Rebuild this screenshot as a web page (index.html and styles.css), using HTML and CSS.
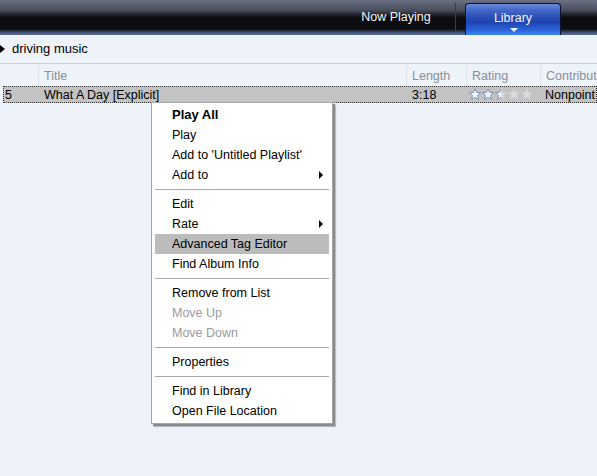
FILE: index.html
```html
<!DOCTYPE html>
<html lang="en">
  <head>
    <meta charset="utf-8">
    <title>Library</title>
    <link rel="stylesheet" href="styles.css">
  </head>
  <body>
    <div class="topbar">
      <div class="tab">Now Playing</div>
      <div class="tab-sep"></div>
      <div class="tab tab-on">Library<span class="tab-arrow"></span></div>
    </div>
    <div class="crumb"><span class="crumb-arrow"></span>driving music</div>
    <div class="list">
      <div class="row head">
        <div class="c-num"></div>
        <div class="c-title">Title</div>
        <div class="c-len">Length</div>
        <div class="c-rate">Rating</div>
        <div class="c-by">Contribut</div>
      </div>
      <div class="row sel">
        <div class="c-num">5</div>
        <div class="c-title">What A Day [Explicit]</div>
        <div class="c-len">3:18</div>
        <div class="c-rate stars">
          <svg width="64" height="13" viewBox="0 0 64 13">
            <defs>
              <path id="star" d="M6 0.8 L7.6 4.4 L11.6 4.6 L8.5 7.3 L9.5 11.6 L6 9.3 L2.5 11.6 L3.5 7.3 L0.4 4.6 L4.4 4.4 Z"/>
              <clipPath id="half"><rect x="0" y="0" width="6" height="13"/></clipPath>
            </defs>
            <use href="#star" x="0" fill="#f6f9ff" stroke="#7d93b8" stroke-width="1"/>
            <use href="#star" x="13" fill="#f6f9ff" stroke="#7d93b8" stroke-width="1"/>
            <use href="#star" x="26" fill="#d8dadd" stroke="#cdd0d4" stroke-width="1"/>
            <g transform="translate(26 0)"><use href="#star" fill="#f6f9ff" stroke="#7d93b8" stroke-width="1" clip-path="url(#half)"/></g>
            <use href="#star" x="39" fill="#d8dadd" stroke="#cdd0d4" stroke-width="1"/>
            <use href="#star" x="52" fill="#d8dadd" stroke="#cdd0d4" stroke-width="1"/>
          </svg>
        </div>
        <div class="c-by">Nonpoint</div>
      </div>
    </div>

    <ul class="menu">
      <li class="bold">Play All</li>
      <li>Play</li>
      <li>Add to 'Untitled Playlist'</li>
      <li class="sub">Add to</li>
      <li class="sep"></li>
      <li>Edit</li>
      <li class="sub">Rate</li>
      <li class="hot">Advanced Tag Editor</li>
      <li>Find Album Info</li>
      <li class="sep"></li>
      <li>Remove from List</li>
      <li class="off">Move Up</li>
      <li class="off">Move Down</li>
      <li class="sep"></li>
      <li>Properties</li>
      <li class="sep"></li>
      <li>Find in Library</li>
      <li>Open File Location</li>
    </ul>
  </body>
</html>
```

FILE: styles.css
```css
html { box-sizing : border-box }
*, *:before, *:after { box-sizing : inherit }

:root {
  --c-bg : #eef2f9;
  --c-line : #c6cedb;
  --c-head : #8a8f99;
  --c-sel : #c3c3c3;
  --c-fg : #000;
  --c-menu-line : #a8a8a8;

  --f-ui : "Liberation Sans", "DejaVu Sans", sans-serif;
}

body {
  margin : 0;
  background-color : var(--c-bg);
  font-family : var(--f-ui);
  font-size : 12px;
  color : var(--c-fg);
  overflow : hidden;
}

/* top bar */

.topbar {
  height : 35px;
  display : flex;
  justify-content : flex-end;
  align-items : flex-end;
  padding-right : 36px;
  background : linear-gradient(to bottom, #6b7183 0px, #4a4f5e 10px, #202228 15px, #0b0b0d 18px, #0d0e12 29px, #2a3246 31px, #4a5c86 33px, #5a6c96 35px);
}

.tab {
  height : 35px;
  width : 96px;
  color : #f2f4f8;
  font-size : 12.5px;
  display : flex;
  justify-content : center;
  padding-top : 10px;
  position : relative;
}

.tab-sep {
  width : 1px;
  height : 28px;
  margin : 0 9px 4px 11px;
  background : #3a3e48;
}

.tab-on {
  height : 32px;
  padding-top : 7px;
  border : 1px solid #0c1530;
  border-bottom : none;
  border-radius : 4px 4px 0 0;
  background : linear-gradient(to bottom, #6e8ad8 0px, #4468cc 6px, #2a4cb4 14px, #1e44b0 18px, #2c62d8 26px, #3a86f0 31px);
}

.tab-arrow {
  position : absolute;
  left : 44px;
  bottom : 3px;
  border-left : 4px solid transparent;
  border-right : 4px solid transparent;
  border-top : 4px solid #eef2fa;
}

/* breadcrumb */

.crumb {
  height : 29px;
  display : flex;
  align-items : center;
  gap : 7px;
  font-size : 13px;
  padding-bottom : 1px;
  border-bottom : 1px solid var(--c-line);
}

.crumb-arrow {
  border-top : 4px solid transparent;
  border-bottom : 4px solid transparent;
  border-left : 5px solid #000;
}

/* list */

.row {
  display : flex;
  align-items : center;
  white-space : nowrap;
}

.row > div { padding-left : 5px; overflow : hidden }

.c-num { width : 38px }
.c-title { width : 368px }
.c-len { width : 60px }
.c-rate { width : 74px }
.c-by { flex : 1 }

.head {
  height : 22px;
  padding-top : 1px;
  color : var(--c-head);
  font-size : 12.5px;
}

.head > div {
  height : 100%;
  display : flex;
  align-items : center;
}

.head > div + div { border-left : 1px solid #dde2ea }

.sel {
  height : 17px;
  margin-left : 3px;
  background : var(--c-sel);
  outline : 1px dotted #333;
  outline-offset : -1px;
  font-size : 12.5px;
}

.sel .c-num { width : 35px; padding-left : 2px }
.sel .c-title { padding-left : 6px }
.sel .c-len { padding-left : 6px }
.sel .stars { display : flex; padding-left : 3px }

/* context menu */

.menu {
  position : absolute;
  left : 151px;
  top : 102px;
  width : 182px;
  margin : 0;
  padding : 2px 3px;
  list-style : none;
  background : #fff;
  border : 1px solid #a6a6a6;
  box-shadow : 2px 2px 0 #8a8a8a, 3px 3px 1px #b8bcc4;
  font-size : 12.5px;
}

.menu li {
  height : 20px;
  line-height : 20px;
  padding-left : 17px;
  position : relative;
}

.menu .bold { font-weight : bold; font-size : 13px }
.menu .hot { background : #bcbcbc }
.menu .off { color : #9a9a9a }

.menu .sub:after {
  content : "";
  position : absolute;
  right : 6px;
  top : 6px;
  border-top : 4px solid transparent;
  border-bottom : 4px solid transparent;
  border-left : 4px solid #000;
}

.menu .sep {
  height : 9px;
  padding : 0;
}

.menu .sep:after {
  content : "";
  position : absolute;
  left : 0;
  right : 0;
  top : 4px;
  border-top : 1px solid var(--c-menu-line);
}
```
